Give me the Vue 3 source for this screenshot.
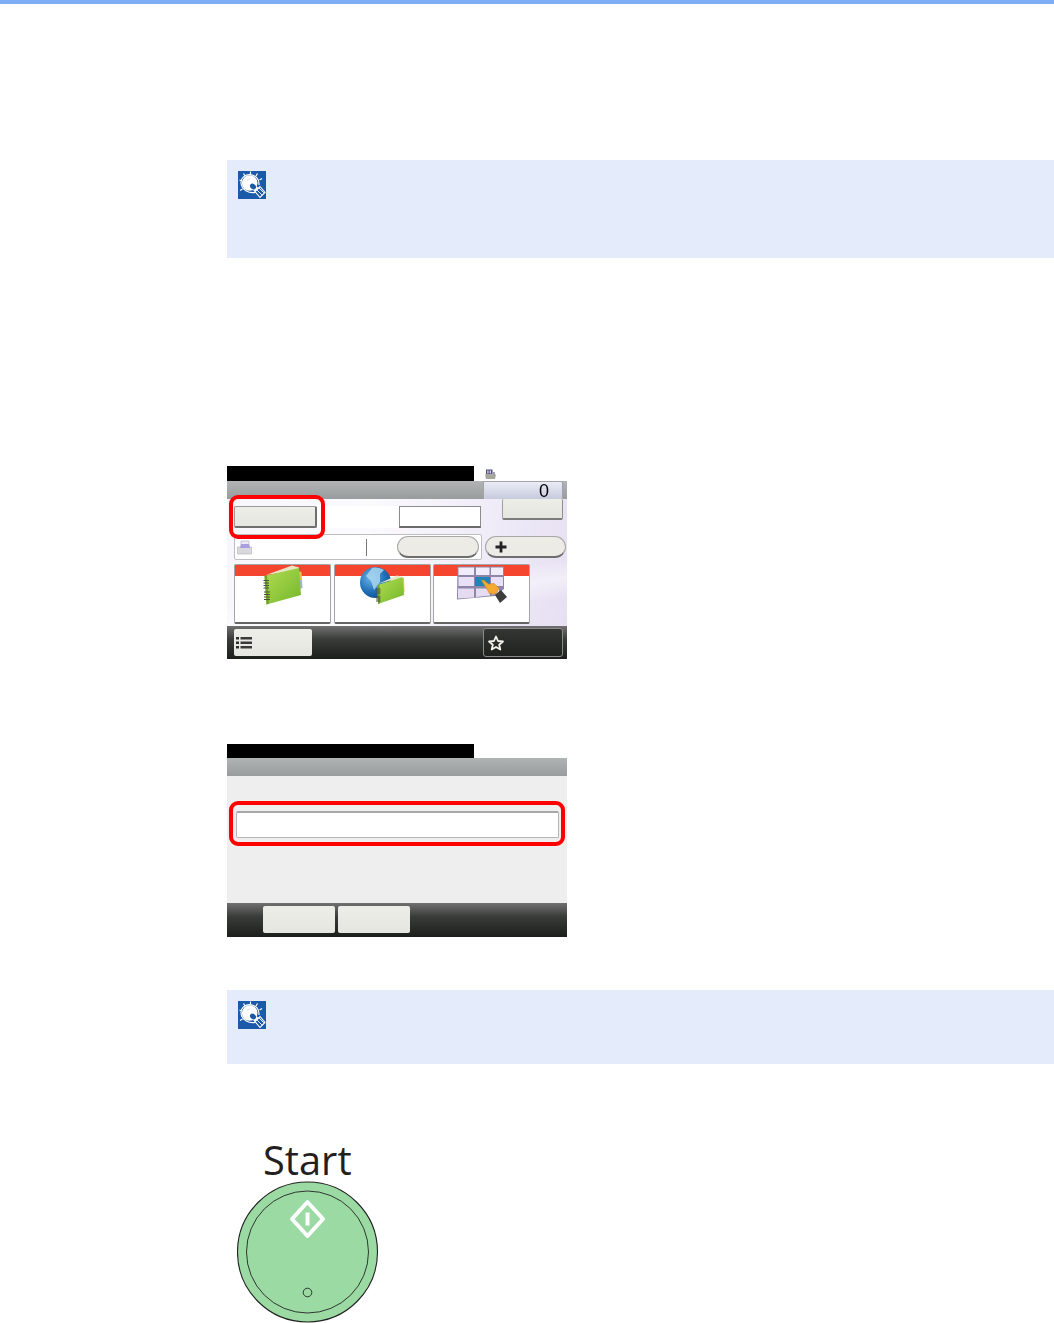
<script setup>
const tiles = ["book", "globe", "grid"];
</script>
<template>
    <div class="page">
        <div class="top-bar"></div>
        <div class="content">
            <div class="note note-first">
                <svg class="bulb" viewBox="0 0 28 28">
                    <rect width="28" height="28" fill="#1b5aa8"></rect>
                    <g fill="none" stroke="#fff" stroke-width="1.2">
                        <path d="M1.500 9 L4 10 M5.500 2.500 L7 5 M12.500 0.500 V3 M19.500 2.500 L18 5 M24 7.500 L21.500 9 M2 19.500 L4.500 18"></path>
                        <path d="M17 21.500 C11 22.500 3.500 19 3 12 C2.600 7 7 3.400 12 3.600 C17.500 3.900 21.500 8 21 14"></path>
                    </g>
                    <circle cx="11.700" cy="12" r="7.800" fill="#fff"></circle>
                    <path d="M13.500 12 L21.500 17.500 L18.500 22.500 L12 16 Z" fill="#fff"></path>
                    <path d="M17 20.500 L22 15.500 L27 21.500 L22 26.500 Z" fill="#1b5aa8" stroke="#fff" stroke-width="1.100"></path>
                    <path d="M18.800 18.800 L24 24 M20.800 16.800 L25.800 21.800" stroke="#fff" stroke-width="0.900"></path>
                    <ellipse cx="15" cy="15.500" rx="3.300" ry="2.500" transform="rotate(40 15 15.500)" fill="#1b5aa8"></ellipse>
                    <path d="M9 9.500 L12.500 7.500" stroke="#cfdcf0" stroke-width="1"></path>
                </svg>
            </div>

            <div class="screen screen-send">
                <div class="title-row">
                    <div class="black-bar"></div>
                    <svg class="printer-mini" viewBox="0 0 11 11">
                        <path d="M1 0.500 H7.500 V5.500 H1 Z" fill="#4d4d78"></path>
                        <path d="M2.300 1.500 H3.500 V4.500 H2.300 Z M4.700 1.500 H5.900 V4.500 H4.700 Z" fill="#e8e8f2"></path>
                        <path d="M7.500 3 H10 V6 H7.500 Z" fill="#9a9ab0"></path>
                        <path d="M0 5.500 H11 L10 10 H1 Z" fill="#a6a69c"></path>
                    </svg>
                </div>
                <div class="gray-band">
                    <div class="counter">0</div>
                </div>
                <div class="send-body">
                    <div class="dest-row">
                        <div class="btn dest-btn"></div>
                        <div class="dest-gap"></div>
                        <div class="dest-field"></div>
                        <div class="btn side-btn"></div>
                    </div>
                    <div class="fax-row">
                        <div class="fax-box">
                            <svg class="fax-icon" viewBox="0 0 15 15">
                                <path d="M4 1 H12 V6 H4 Z" fill="#ece9f6" stroke="#b4b4c2" stroke-width="0.700"></path>
                                <path d="M0.500 7 H14.500 V14 H0.500 Z" fill="#d9d9dd" stroke="#b9b9c2" stroke-width="0.700"></path>
                                <path d="M4 4 H12 L13 8 H3 Z" fill="#a89fdc"></path>
                            </svg>
                            <div class="fax-divider"></div>
                            <div class="pill"></div>
                        </div>
                        <div class="pill plus-pill">
                            <svg class="plus" viewBox="0 0 12 12">
                                <path d="M6 0.500 V11.500 M0.500 6 H11.500" stroke="#222" stroke-width="2.800"></path>
                            </svg>
                        </div>
                    </div>
                    <div class="tiles">
                        <div class="tile" v-for="t in tiles" :key="t">
                            <div class="tile-head"></div>
                            <svg class="tile-icon" viewBox="0 0 97 60">
                                <defs>
                                    <linearGradient id="bookGreen" x1="0" y1="0" x2="1" y2="1">
                                        <stop offset="0" stop-color="#b2de52"></stop>
                                        <stop offset="1" stop-color="#74b52a"></stop>
                                    </linearGradient>
                                    <radialGradient id="globeBlue" cx="0.35" cy="0.35" r="0.75">
                                        <stop offset="0" stop-color="#6cb4e6"></stop>
                                        <stop offset="0.6" stop-color="#1f6fb8"></stop>
                                        <stop offset="1" stop-color="#0f4a85"></stop>
                                    </radialGradient>
                                </defs>
                                <g v-if="t === 'book'">
                                    <path d="M64 7 L67.500 8 L68 16 L65 16 Z" fill="#e8c04a"></path>
                                    <path d="M65 16 L68 16 L68.500 24 L65.500 25 Z" fill="#9fb2d8"></path>
                                    <path d="M32 11 L58 1.500 L65 3.500 L65 6 Z" fill="#e6e6c4"></path>
                                    <path d="M30.500 12 L65 4 L67 31 L32.500 40.500 Z" fill="url(#bookGreen)"></path>
                                    <path d="M30.500 12 L33 11.400 L35 39.800 L32.500 40.500 Z" fill="#6ea62c"></path>
                                    <path d="M29.500 16.500 H35 M29.500 19 H35 M29.500 21.500 H35 M29.500 24 H35 M30 28 H36 M30 30.500 H36 M30 33 H36 M30 35.500 H36" stroke="#4c5238" stroke-width="1.200"></path>
                                </g>
                                <g v-else-if="t === 'globe'">
                                    <circle cx="41.500" cy="18.500" r="15.500" fill="url(#globeBlue)"></circle>
                                    <path d="M38 4 C42 3 47 4 50 6 L46 10 L46 18 L40 26 L37 17 L32 12 Z" fill="#a9d6ee" opacity="0.850"></path>
                                    <path d="M67 14 L70 14 L70.500 28 L69 29 Z" fill="#e8c04a"></path>
                                    <path d="M44 20 L63 11.500 L69 13 Z" fill="#e6e6c4"></path>
                                    <path d="M43.500 21 L68.500 13 L70 31 L44 40 Z" fill="url(#bookGreen)"></path>
                                    <path d="M43.500 21 L45.500 20.400 L46 39.300 L44 40 Z" fill="#6ea62c"></path>
                                    <path d="M42 25 H46.500 M42 27 H46.500 M42 29 H46.500 M42 33 H46.500 M42 35 H46.500 M42 37 H46.500" stroke="#4c5238" stroke-width="1"></path>
                                </g>
                                <g v-else>
                                    <path d="M24.500 2.500 H71 V25 L62 32 L24 35.500 Z" fill="#8d86a8"></path>
                                    <path d="M25.500 3.500 H41 V11 H25.500 Z M43 3.500 H56.500 V11 H43 Z M58 3.500 H70 V11 H58 Z" fill="#f1ecfa"></path>
                                    <path d="M25.500 13 H41 V22 H25.500 Z M58 13 H70 V22 H58 Z" fill="#e8e0f6"></path>
                                    <path d="M42 13 H57 V22 H42 Z" fill="#1f84b8"></path>
                                    <path d="M25 24.500 H41 V33.500 L25 34.500 Z M43 24.500 H57 V31.500 L43 33 Z M59 24.500 H66 V29.500 L59 30.500 Z" fill="#e5dcf2"></path>
                                    <path d="M48.500 16.500 C50 15.500 52 16.500 53 18 L55.500 20 L61 19.500 L66 24 L63 30 L56.500 29.500 L53 23.500 Z" fill="#f5a931" stroke="#c07a1c" stroke-width="0.500"></path>
                                    <path d="M62 31 L68 26 L74 33 L67 39 Z" fill="#3d3d3d"></path>
                                </g>
                            </svg>
                        </div>
                    </div>
                </div>
                <div class="footer footer-send">
                    <div class="btn list-btn">
                        <svg class="list-icon" viewBox="0 0 16 16">
                            <path d="M0 2 H3 V4.500 H0 Z M0 6.500 H3 V9 H0 Z M0 11 H3 V13.500 H0 Z" fill="#2b2b2b"></path>
                            <path d="M4.500 2 H16 V4.500 H4.500 Z M4.500 6.500 H16 V9 H4.500 Z M4.500 11 H16 V13.500 H4.500 Z" fill="#3a3a3a"></path>
                        </svg>
                    </div>
                    <div class="star-btn">
                        <svg class="star" viewBox="0 0 16 16">
                            <path d="M8 1.500 L10 6 L15 6.500 L11.200 9.700 L12.300 14.500 L8 12 L3.700 14.500 L4.800 9.700 L1 6.500 L6 6 Z" fill="none" stroke="#f4f4ec" stroke-width="1.800" stroke-linejoin="round"></path>
                        </svg>
                    </div>
                </div>
                <div class="red-mark mark-dest"></div>
            </div>

            <div class="screen screen-entry">
                <div class="title-row title-row-entry">
                    <div class="black-bar"></div>
                </div>
                <div class="gray-band"></div>
                <div class="entry-body">
                    <div class="entry-field"></div>
                </div>
                <div class="footer footer-entry">
                    <div class="btn entry-btn"></div>
                    <div class="btn entry-btn"></div>
                </div>
                <div class="red-mark mark-entry"></div>
            </div>

            <div class="note note-second">
                <svg class="bulb" viewBox="0 0 28 28">
                    <rect width="28" height="28" fill="#1b5aa8"></rect>
                    <g fill="none" stroke="#fff" stroke-width="1.2">
                        <path d="M1.500 9 L4 10 M5.500 2.500 L7 5 M12.500 0.500 V3 M19.500 2.500 L18 5 M24 7.500 L21.500 9 M2 19.500 L4.500 18"></path>
                        <path d="M17 21.500 C11 22.500 3.500 19 3 12 C2.600 7 7 3.400 12 3.600 C17.500 3.900 21.500 8 21 14"></path>
                    </g>
                    <circle cx="11.700" cy="12" r="7.800" fill="#fff"></circle>
                    <path d="M13.500 12 L21.500 17.500 L18.500 22.500 L12 16 Z" fill="#fff"></path>
                    <path d="M17 20.500 L22 15.500 L27 21.500 L22 26.500 Z" fill="#1b5aa8" stroke="#fff" stroke-width="1.100"></path>
                    <path d="M18.800 18.800 L24 24 M20.800 16.800 L25.800 21.800" stroke="#fff" stroke-width="0.900"></path>
                    <ellipse cx="15" cy="15.500" rx="3.300" ry="2.500" transform="rotate(40 15 15.500)" fill="#1b5aa8"></ellipse>
                    <path d="M9 9.500 L12.500 7.500" stroke="#cfdcf0" stroke-width="1"></path>
                </svg>
            </div>

            <div class="start">
                <div class="start-label">Start</div>
                <svg class="start-key" viewBox="0 0 142 142">
                    <circle cx="70.500" cy="71" r="70" fill="#9bdba3" stroke="#222" stroke-width="1.100"></circle>
                    <circle cx="70.500" cy="71" r="61" fill="none" stroke="#222" stroke-width="0.900"></circle>
                    <path d="M70.500 21 L86 38 L70.500 55 L55 38 Z" fill="none" stroke="#fff" stroke-width="4" stroke-linejoin="round"></path>
                    <rect x="68.500" y="31.500" width="4" height="13" fill="#fff"></rect>
                    <circle cx="70.500" cy="111.500" r="4.300" fill="none" stroke="#222" stroke-width="0.900"></circle>
                </svg>
            </div>
        </div>
    </div>
</template>
<style>
html, body {
    background: #fff;
}
</style>
<style scoped>
.page {
    width: 1054px;
    height: 1323px;
    overflow: hidden;
    background: #fff;
}
.top-bar {
    height: 4px;
    background: #80aef6;
}
.content {
    margin-left: 227px;
}
.note {
    background: #e4ebfa;
    padding: 11px;
    box-sizing: border-box;
}
.note-first {
    margin-top: 156px;
    height: 98px;
}
.note-second {
    margin-top: 53px;
    height: 74px;
}
.bulb {
    display: block;
    width: 28px;
    height: 28px;
}
.screen {
    position: relative;
    width: 340px;
    filter: blur(0.4px);
}
.screen-send {
    margin-top: 208px;
    height: 193px;
}
.screen-entry {
    margin-top: 85px;
    height: 193px;
}
.title-row {
    display: flex;
    height: 15px;
}
.title-row-entry {
    height: 14px;
}
.black-bar {
    width: 247px;
    background: #000;
}
.printer-mini {
    width: 11px;
    height: 11px;
    margin: 3px 0 0 11px;
}
.gray-band {
    height: 18px;
    background: linear-gradient(#b1b4b4, #999c9c);
    display: flex;
    justify-content: flex-end;
    padding-right: 4px;
}
.counter {
    width: 80px;
    height: 18px;
    box-sizing: border-box;
    padding-right: 13px;
    text-align: right;
    font-family: "Liberation Sans", sans-serif;
    font-size: 18px;
    line-height: 18px;
    color: #000;
    background: linear-gradient(#eaecf6, #c6cadc);
    border: 1px solid #a0a2a8;
    border-bottom: none;
    border-radius: 2px 2px 0 0;
}
.send-body {
    height: 127px;
    box-sizing: border-box;
    padding: 7px 0 0 7px;
    background:
        linear-gradient(172deg, transparent 62%, rgba(255, 255, 255, 0.45) 72%, transparent 84%),
        linear-gradient(100deg, #f7f6fb 0%, #fbfafd 40%, #f0ecf8 72%, #e6e0f2 100%);
}
.btn {
    background: linear-gradient(#eeeee9, #e6e6e0);
    border-radius: 2px;
    box-sizing: border-box;
    border-right: 1px solid #8e8e8e;
    border-bottom: 2px solid #7c7c7c;
}
.dest-row {
    display: flex;
    height: 22px;
}
.dest-btn {
    width: 83px;
    border: 1px solid #9a9a9a;
    border-bottom: 2px solid #6f6f6f;
    border-right: 2px solid #6f6f6f;
}
.dest-gap {
    width: 82px;
    background: #fff;
}
.dest-field {
    width: 82px;
    background: #fff;
    box-sizing: border-box;
    border: 1px solid #8c8c8c;
    border-bottom: 2px solid #6a6a6a;
}
.side-btn {
    width: 61px;
    height: 21px;
    margin: -7px 0 0 21px;
    border-left: 1px solid #a0a0a0;
}
.fax-row {
    display: flex;
    margin-top: 6px;
    height: 26px;
}
.fax-box {
    width: 248px;
    box-sizing: border-box;
    background: #fff;
    border: 1px solid #bdbdc4;
    border-radius: 2px;
    display: flex;
    align-items: center;
}
.fax-icon {
    width: 15px;
    height: 15px;
    margin-left: 2px;
}
.fax-divider {
    width: 1px;
    height: 17px;
    background: #777;
    margin-left: 114px;
}
.pill {
    width: 82px;
    height: 22px;
    margin-left: 30px;
    box-sizing: border-box;
    border-radius: 11px;
    background: #ecebe6;
    border: 1px solid #a8a8a8;
    border-bottom: 2px solid #6e6e6e;
}
.plus-pill {
    margin: 2px 0 0 3px;
    width: 81px;
    display: flex;
    align-items: center;
}
.plus {
    width: 12px;
    height: 12px;
    margin-left: 9px;
}
.tiles {
    display: flex;
    margin-top: 4px;
}
.tile {
    position: relative;
    width: 97px;
    height: 60px;
    margin-right: 2px;
    box-sizing: border-box;
    background: #fff;
    border: 1px solid #a5a5a5;
    border-bottom: 2px solid #666;
    border-radius: 2px;
}
.tile:first-child {
    margin-right: 3px;
}
.tile-head {
    height: 11px;
    background: #f5452f;
}
.tile-icon {
    position: absolute;
    left: -1px;
    top: -1px;
    width: 97px;
    height: 60px;
}
.footer {
    display: flex;
    background: linear-gradient(#707070, #3a3c3a 40%, #1b1e1b);
}
.footer-send {
    height: 33px;
    align-items: flex-start;
    justify-content: space-between;
    padding: 2px 4px 0 7px;
    box-sizing: border-box;
}
.list-btn {
    width: 78px;
    height: 27px;
    margin-top: 1px;
    border: none;
    display: flex;
    align-items: center;
}
.list-icon {
    width: 16px;
    height: 16px;
    margin-left: 2px;
}
.star-btn {
    width: 80px;
    height: 29px;
    box-sizing: border-box;
    background: linear-gradient(#343634, #1f221f);
    border: 1px solid #8a8a8a;
    border-radius: 3px;
    display: flex;
    align-items: center;
}
.star {
    width: 16px;
    height: 16px;
    margin-left: 4px;
}
.entry-body {
    height: 127px;
    box-sizing: border-box;
    padding: 35px 0 0 9px;
    background: #eeeeee;
}
.entry-field {
    width: 323px;
    height: 27px;
    box-sizing: border-box;
    background: #fff;
    border: 1px solid #b5b5b5;
    border-top: 2px solid #a8a8a8;
    border-radius: 2px;
}
.footer-entry {
    height: 34px;
    gap: 3px;
    padding: 3px 0 0 36px;
    box-sizing: border-box;
}
.entry-btn {
    width: 72px;
    height: 27px;
    border: none;
}
.red-mark {
    position: absolute;
    box-sizing: border-box;
    border: 4px solid #f00;
    border-radius: 9px;
}
.mark-dest {
    left: 2px;
    top: 29px;
    width: 96px;
    height: 44px;
}
.mark-entry {
    left: 2px;
    top: 57px;
    width: 336px;
    height: 45px;
}
.start {
    margin-top: 75px;
    width: 160px;
}
.start-label {
    height: 42px;
    margin-left: 36px;
    font-family: "Open Sans", sans-serif;
    font-size: 39.8px;
    line-height: 42px;
    color: #231f20;
}
.start-key {
    display: block;
    width: 142px;
    height: 142px;
    margin-left: 10px;
}
</style>
